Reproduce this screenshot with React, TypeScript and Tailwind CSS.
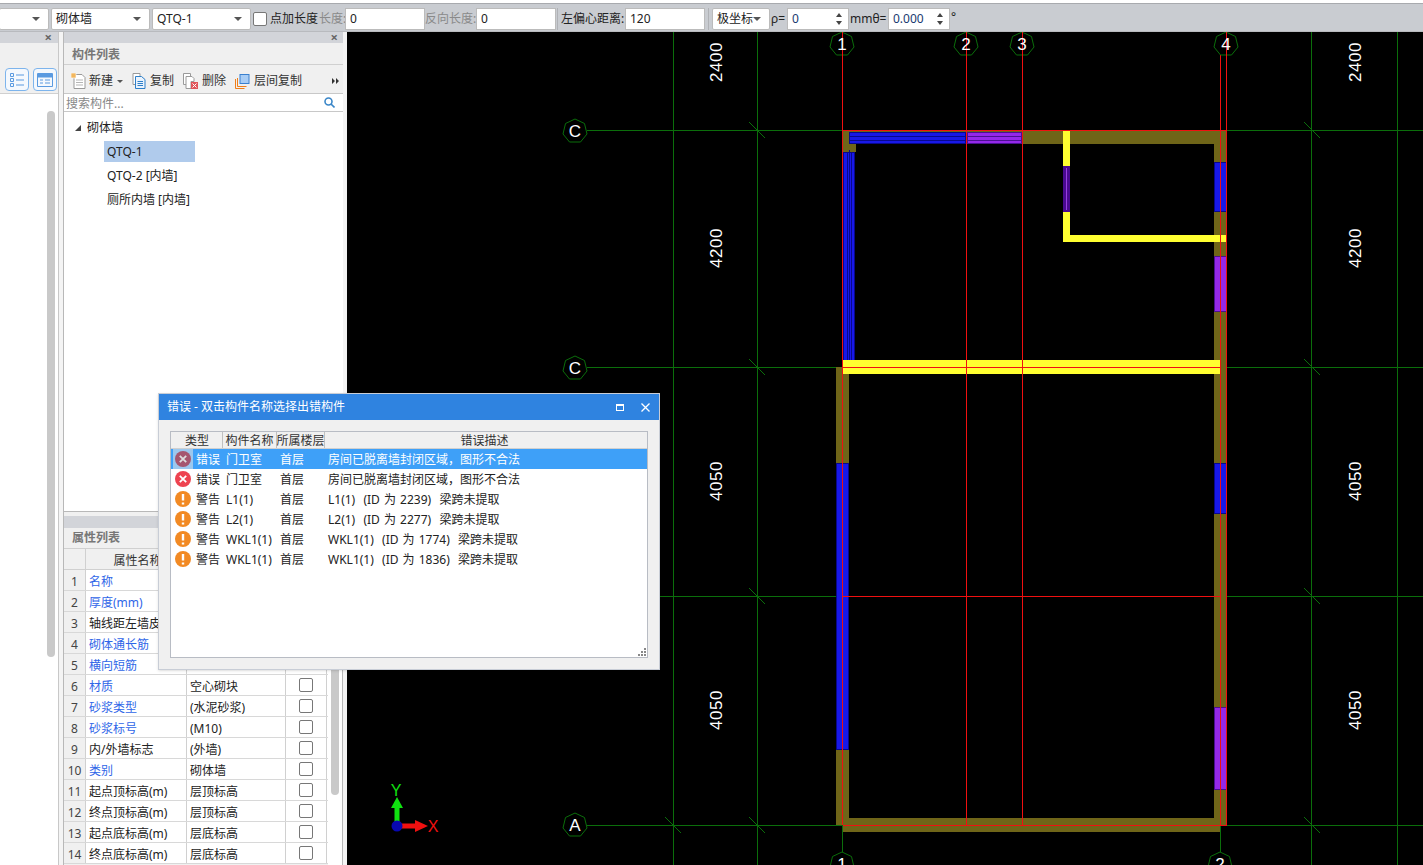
const FONT = "font-['Noto_Sans','Noto_Sans_CJK_SC',sans-serif]";

const errors = [
  { kind: "错误", name: "门卫室", floor: "首层", desc: "房间已脱离墙封闭区域，图形不合法", selected: true },
  { kind: "错误", name: "门卫室", floor: "首层", desc: "房间已脱离墙封闭区域，图形不合法" },
  { kind: "警告", name: "L1(1)", floor: "首层", desc: "L1(1)  (ID 为 2239)  梁跨未提取" },
  { kind: "警告", name: "L2(1)", floor: "首层", desc: "L2(1)  (ID 为 2277)  梁跨未提取" },
  { kind: "警告", name: "WKL1(1)", floor: "首层", desc: "WKL1(1)  (ID 为 1774)  梁跨未提取" },
  { kind: "警告", name: "WKL1(1)", floor: "首层", desc: "WKL1(1)  (ID 为 1836)  梁跨未提取" },
];

const props = [
  { name: "名称", value: "", blue: true },
  { name: "厚度(mm)", value: "", blue: true },
  { name: "轴线距左墙皮距离", value: "" },
  { name: "砌体通长筋", value: "", blue: true },
  { name: "横向短筋", value: "", blue: true },
  { name: "材质", value: "空心砌块", blue: true, check: true },
  { name: "砂浆类型", value: "(水泥砂浆)", blue: true, check: true },
  { name: "砂浆标号", value: "(M10)", blue: true, check: true },
  { name: "内/外墙标志", value: "(外墙)", check: true },
  { name: "类别", value: "砌体墙", blue: true, check: true },
  { name: "起点顶标高(m)", value: "层顶标高", check: true },
  { name: "终点顶标高(m)", value: "层顶标高", check: true },
  { name: "起点底标高(m)", value: "层底标高", check: true },
  { name: "终点底标高(m)", value: "层底标高", check: true },
];

function Caret() {
  return <span className="h-0 w-0 border-x-[4px] border-t-[4px] border-x-transparent border-t-[#555]" />;
}

function Select({ w, text }: { w: string; text: string }) {
  return (
    <div className={`${w} flex h-[22px] shrink-0 items-center justify-between rounded-[2px] border border-[#bbb] bg-white pl-1 pr-2`}>
      <span>{text}</span>
      <Caret />
    </div>
  );
}

function Field({ w, text }: { w: string; text: string }) {
  return <div className={`${w} flex h-[22px] shrink-0 items-center border border-[#bbb] bg-white pl-1`}>{text}</div>;
}

function Spin({ w, text }: { w: string; text: string }) {
  return (
    <div className={`${w} flex h-[22px] shrink-0 items-center justify-between border border-[#bbb] bg-white pl-1 pr-1.5 text-[#1a3a70]`}>
      <span>{text}</span>
      <span className="flex flex-col gap-[4px]">
        <span className="h-0 w-0 border-x-[3px] border-b-[4px] border-x-transparent border-b-[#444]" />
        <span className="h-0 w-0 border-x-[3px] border-t-[4px] border-x-transparent border-t-[#444]" />
      </span>
    </div>
  );
}

function Toolbar() {
  return (
    <div className="flex h-[27px] items-center whitespace-nowrap bg-[#c9ccd1] pt-[2px] text-[12px] text-[#222]">
      <Select w="w-[50px] ml-[-1px]" text="" />
      <Select w="w-[99px] ml-[2px]" text="砌体墙" />
      <Select w="w-[99px] ml-[2px]" text="QTQ-1" />
      <span className="ml-[2px] h-[14px] w-[14px] shrink-0 rounded-[2px] border border-[#777] bg-white" />
      <span className="ml-[3px] w-[49px] shrink-0">点加长度</span>
      <span className="w-[26px] shrink-0 text-[#8a8a8a]">长度:</span>
      <Field w="w-[80px]" text="0" />
      <span className="w-[51px] shrink-0 text-center text-[#8a8a8a]">反向长度:</span>
      <Field w="w-[80px]" text="0" />
      <span className="ml-[1px] h-[22px] w-px shrink-0 bg-[#b0b2b6]" />
      <span className="ml-[3px] w-[64px] shrink-0">左偏心距离:</span>
      <Field w="w-[80px]" text="120" />
      <span className="mx-[3px] h-[22px] w-px shrink-0 bg-[#b0b2b6]" />
      <Select w="w-[58px]" text="极坐标" />
      <span className="w-[17px] shrink-0 pl-[1px]">ρ=</span>
      <Spin w="w-[62px]" text="0" />
      <span className="w-[39px] shrink-0 pl-[1px]">mmθ=</span>
      <Spin w="w-[62px]" text="0.000" />
      <span className="ml-[1px] -translate-y-[2px]">°</span>
    </div>
  );
}

function NewIcon() {
  return (
    <svg width="16" height="16" viewBox="0 0 16 16" className="shrink-0">
      <path d="M3 1.5h8l3 3v11H3z" fill="#fff" stroke="#9a9a9a" />
      <path d="M5 7h7M5 9.5h7M5 12h7" stroke="#b5b5b5" />
      <rect x="0" y="0" width="5" height="5" fill="#f2b75e" stroke="#fff" strokeWidth=".6" />
    </svg>
  );
}

function CopyIcon() {
  return (
    <svg width="14" height="16" viewBox="0 0 14 16" className="shrink-0">
      <path d="M1 .5h7v11H1z" fill="#fff" stroke="#9a9a9a" />
      <path d="M3.5 3.5h6l3.5 3v9H3.5z" fill="#eaf3fd" stroke="#2e7fc8" />
      <path d="M5.5 8.5h5.5M5.5 10.5h5.5M5.5 12.5h5.5" stroke="#2e7fc8" />
    </svg>
  );
}

function DeleteIcon() {
  return (
    <svg width="15" height="16" viewBox="0 0 15 16" className="shrink-0">
      <path d="M.5.5h7v11h-7z" fill="#fff" stroke="#9a9a9a" />
      <path d="M3 3.5h6l2 2v3H8v7H3z" fill="#fff" stroke="#9a9a9a" />
      <rect x="8" y="9" width="7" height="7" fill="#e0555a" />
      <path d="M9.5 10.5l4 4M13.5 10.5l-4 4" stroke="#fff" />
    </svg>
  );
}

function LayerIcon() {
  return (
    <svg width="15" height="15" viewBox="0 0 15 15" className="shrink-0">
      <path d="M.5 5v9.5h9M2.5 4v8.500h9" fill="none" stroke="#ef7f1a" />
      <rect x="5" y=".5" width="9" height="9" fill="#a9cdf5" stroke="#3a80cf" />
    </svg>
  );
}

function ListBtn({ kind }: { kind: "list" | "form" }) {
  return (
    <div className="flex h-[23px] w-[24px] items-center justify-center rounded-[4px] border border-[#7db4ec] bg-[#f4f8fd]">
      {kind === "list" ? (
        <svg width="14" height="14" viewBox="0 0 14 14" fill="none" stroke="#5a9ae0">
          <path d="M.5.5h3v3h-3zM.5 5.500h3v3h-3zM.5 10.500h3v3h-3zM6 2h8M6 7h8M6 12h8" />
        </svg>
      ) : (
        <svg width="16" height="14" viewBox="0 0 16 14" fill="none" stroke="#5a9ae0">
          <path d="M.5.500h15v13H.5z" />
          <path d="M1 1h14v3H1z" fill="#5a9ae0" />
          <path d="M3 7h3M8 7h5M3 10h3M8 10h5" />
        </svg>
      )}
    </div>
  );
}

function LeftPane() {
  return (
    <div className="flex w-[59px] shrink-0 flex-col border-r border-[#c8c8c8] bg-white">
      <div className="flex h-[11px] items-center justify-end bg-[#d2d4d9] pr-[6px] text-[13px] font-bold leading-none text-[#666]">×</div>
      <div className="h-[23px] bg-[#f0f0f0]" />
      <div className="flex h-[28px] items-center justify-end gap-[4px] border-b border-[#d0d0d0] bg-[#f0f0f0] pr-[1px]">
        <ListBtn kind="list" />
        <ListBtn kind="form" />
      </div>
      <div className="flex flex-1 justify-end pr-[3px] pt-[17px]">
        <div className="h-[546px] w-[8px] rounded-b-[4px] rounded-t-[4px] bg-[#c9c9c9]" />
      </div>
    </div>
  );
}

function ComponentList() {
  return (
    <div className="flex h-[480px] flex-col border-b border-[#b8b8b8]">
      <div className="flex h-[11px] items-center justify-end bg-[#d2d4d9] pr-[5px] text-[13px] font-bold leading-none text-[#666]">×</div>
      <div className="flex h-[22px] items-center border-b border-[#d0d0d0] bg-[#f0f0f0] pl-[8px] font-bold text-[#777]">
        <span className="translate-y-[1px]">构件列表</span>
      </div>
      <div className="flex h-[28px] items-center whitespace-nowrap bg-[#f0f0f0] pl-[7px] pt-[4px] text-[#333]">
        <NewIcon />
        <span className="ml-[2px]">新建</span>
        <span className="ml-[4px] mr-[9px] h-0 w-0 border-x-[3px] border-t-[3px] border-x-transparent border-t-[#555]" />
        <CopyIcon />
        <span className="ml-[4px]">复制</span>
        <span className="ml-[9px]"><DeleteIcon /></span>
        <span className="ml-[4px]">删除</span>
        <span className="ml-[9px]"><LayerIcon /></span>
        <span className="ml-[4px]">层间复制</span>
        <svg width="7" height="6" viewBox="0 0 7 6" fill="#333" className="ml-auto mr-[4px] shrink-0">
          <path d="M0 0l3 3-3 3zM4 0l3 3-3 3z" />
        </svg>
      </div>
      <div className="flex h-[19px] items-center justify-between border-y border-[#c8c8c8] bg-white pl-[2px] pr-[8px] text-[#888]">
        <span className="translate-y-[1px]">搜索构件...</span>
        <svg width="11" height="11" viewBox="0 0 11 11" fill="none" stroke="#3a86c8" strokeWidth="1.600">
          <circle cx="4.500" cy="4.500" r="3.500" />
          <path d="M7 7l3.500 3.500" />
        </svg>
      </div>
      <div className="flex-1 bg-white pt-[5px] text-[#222]">
        <div className="flex h-[24px] items-center pb-[2px]">
          <span className="ml-[11px] h-0 w-0 border-b-[6px] border-l-[6px] border-b-[#444] border-l-transparent" />
          <span className="ml-[6px]">砌体墙</span>
        </div>
        <div className="ml-[40px] flex h-[21px] w-[91px] items-center bg-[#b0cbec] pl-[3px]">QTQ-1</div>
        <div className="ml-[43px] flex h-[24px] items-center pt-[3px]">QTQ-2 [内墙]</div>
        <div className="ml-[43px] flex h-[24px] items-center pt-[3px]">厕所内墙 [内墙]</div>
      </div>
    </div>
  );
}

function PropertyList() {
  return (
    <div className="mt-[4px] flex flex-1 flex-col">
      <div className="h-[12px] bg-[#d2d4d9]" />
      <div className="flex h-[21px] items-center border-b border-[#d0d0d0] bg-[#f0f0f0] pl-[8px] font-bold text-[#777]">属性列表</div>
      <div className="flex flex-1">
        <div className="w-[264px] shrink-0">
          <div className="flex h-[21px] border-b border-[#d0d0d0] bg-[#f0f0f0] text-[#333]">
            <div className="w-[22px] border-r border-[#d0d0d0]" />
            <div className="flex w-[101px] items-center justify-center whitespace-nowrap border-r border-[#d0d0d0] pl-[3px]">
              <span className="translate-y-[2px]">属性名称</span>
            </div>
            <div className="w-[99px] border-r border-[#d0d0d0]" />
            <div className="w-[41px] border-r border-[#d0d0d0]" />
          </div>
          {props.map((p, i) => (
            <div key={p.name} className="flex h-[21px] border-b border-[#d8d8d8] bg-white">
              <div className="flex w-[22px] items-center justify-center border-r border-[#d0d0d0] bg-[#f0f0f0] text-[#444]">
                <span className="translate-y-[2px]">{i + 1}</span>
              </div>
              <div className={`flex w-[101px] items-center overflow-hidden whitespace-nowrap border-r border-[#d0d0d0] pl-[3px] ${p.blue ? "text-[#2f66e8]" : "text-[#222]"}`}>
                <span className="translate-y-[2px]">{p.name}</span>
              </div>
              <div className="flex w-[99px] items-center border-r border-[#d0d0d0] pl-[3px] text-[#222]">
                <span className="translate-y-[2px]">{p.value}</span>
              </div>
              <div className="flex w-[41px] items-center justify-center border-r border-[#d0d0d0]">
                {p.check && <span className="h-[14px] w-[14px] rounded-[2px] border border-[#777] bg-white" />}
              </div>
            </div>
          ))}
        </div>
        <div className="flex flex-1 justify-center border-r border-[#b8b8b8] bg-white pr-[1px]">
          <div className="mt-[90px] h-[156px] w-[8px] rounded-b-[4px] bg-[#c9c9c9]" />
        </div>
      </div>
    </div>
  );
}

function ErrorIcon({ warn, dim }: { warn: boolean; dim?: boolean }) {
  return (
    <svg width="16" height="16" viewBox="0 0 16 16" className="shrink-0">
      <circle cx="8" cy="8" r="8" fill={warn ? "#f28a24" : dim ? "#a5566f" : "#ee4350"} />
      {warn ? (
        <path d="M8 3v6.500M8 11.500v2" stroke="#fff" strokeWidth="2.400" />
      ) : (
        <path d="M4.800 4.800l6.400 6.400M11.200 4.800l-6.400 6.400" stroke={dim ? "#ddd" : "#fff"} strokeWidth="1.800" />
      )}
    </svg>
  );
}

function ErrorDialog() {
  return (
    <div className="absolute left-[158px] top-[393px] flex h-[277px] w-[502px] flex-col border border-[#c8cdd6] bg-[#f0f0f0] text-[12px] text-[#222] shadow-sm">
      <div className="flex h-[26px] shrink-0 items-center justify-between bg-[#2f83e0] pl-[8px] pr-[9px] text-[#fff]">
        <span>错误 - 双击构件名称选择出错构件</span>
        <div className="flex items-center gap-[17px]">
          <span className="h-[7px] w-[8px] border border-t-2 border-white" />
          <svg width="9" height="9" viewBox="0 0 9 9" stroke="#fff" strokeWidth="1.300"><path d="M.5.500l8 8M8.500.500l-8 8" /></svg>
        </div>
      </div>
      <div className="relative mx-[11px] mt-[11px] flex flex-1 flex-col border border-[#b8bcc4] bg-white">
        <div className="flex h-[17px] shrink-0 border-b border-[#d0d0d0] bg-[#f0f0f0] text-[#333]">
          <div className="flex w-[52px] items-center justify-center border-r border-[#c0c0c0] pl-[1px]"><span className="translate-y-[1px]">类型</span></div>
          <div className="flex w-[54px] items-center justify-center whitespace-nowrap border-r border-[#c0c0c0]"><span className="translate-y-[1px]">构件名称</span></div>
          <div className="flex w-[48px] items-center justify-center whitespace-nowrap border-r border-[#c0c0c0]"><span className="translate-y-[1px]">所属楼层</span></div>
          <div className="flex flex-1 items-center justify-center pr-[3px]"><span className="translate-y-[1px]">错误描述</span></div>
        </div>
        {errors.map((e, i) => (
          <div key={i} className={`flex h-[20px] items-center ${e.selected ? "bg-[#3ea0f8] text-white" : ""}`}>
            <span className={`ml-[2px] flex h-[20px] w-[20px] items-center justify-center ${e.selected ? "bg-[#9cc8ee]" : ""}`}>
              <ErrorIcon warn={e.kind === "警告"} dim={e.selected} />
            </span>
            <span className="ml-[3px] w-[30px] translate-y-[1px]">{e.kind}</span>
            <span className="w-[54px] translate-y-[1px] whitespace-nowrap">{e.name}</span>
            <span className="w-[48px] translate-y-[1px]">{e.floor}</span>
            <span className="translate-y-[1px] whitespace-pre [word-spacing:1px]">{e.desc}</span>
          </div>
        ))}
        <svg width="8" height="8" viewBox="0 0 8 8" fill="#888" className="absolute bottom-[1px] right-[1px]">
          <path d="M6 0h2v2H6zM3 3h2v2H3zM6 3h2v2H6zM0 6h2v2H0zM3 6h2v2H3zM6 6h2v2H6z" />
        </svg>
      </div>
      <div className="h-[11px] shrink-0" />
    </div>
  );
}

const green = "#0b6e0b";
const red = "#f01010";
const olive = "#6f6518";

function Axis({ x, y, label, through }: { x: number; y: number; label: string; through?: boolean }) {
  return (
    <g>
      <polygon
        points={`${x},${y - 12} ${x + 9.500},${y - 7.500} ${x + 12},${y + 3} ${x + 5.500},${y + 11} ${x - 5.500},${y + 11} ${x - 12},${y + 3} ${x - 9.500},${y - 7.500}`}
        fill="#000"
        stroke={green}
      />
      {through && <path d={`M${x + 0.5} 32V${y + 12}`} stroke={red} shapeRendering="crispEdges" />}
      <text x={x} y={y + 6} fill="#fff" fontSize="17" textAnchor="middle" fontFamily="Liberation Sans, sans-serif">{label}</text>
    </g>
  );
}

function Dim({ x, y, label }: { x: number; y: number; label: string }) {
  return (
    <text transform={`translate(${x} ${y}) rotate(-90)`} fill="#fff" fontSize="17" textAnchor="middle" fontFamily="Liberation Sans, sans-serif" letterSpacing="0.500">
      {label}
    </text>
  );
}

// bars: number of dark lines running along the beam
function Rebar({ x, y, w, h, color, edge, bars = 1 }: { x: number; y: number; w: number; h: number; color: string; edge: string; bars?: number }) {
  const vertical = h > w;
  const offsets = bars === 2 ? [-2, 2] : [0];
  return (
    <g>
      <rect x={x + 0.5} y={y + 0.5} width={w - 1} height={h - 1} fill={color} stroke={edge} />
      {offsets.map((o) =>
        vertical ? (
          <path key={o} d={`M${x + Math.floor(w / 2) + o + 0.5} ${y}V${y + h}`} stroke={edge} />
        ) : (
          <path key={o} d={`M${x} ${y + Math.floor(h / 2) + o + 0.5}H${x + w}`} stroke={edge} />
        ),
      )}
      {vertical ? (
        <path d={`M${x + Math.floor(w / 2) + 0.5} ${y - 2}V${y + h + 2}`} stroke={edge} />
      ) : (
        <path d={`M${x - 2} ${y + Math.floor(h / 2) + 0.5}H${x + w + 2}`} stroke={edge} strokeOpacity="0" />
      )}
    </g>
  );
}

function Plan() {
  const ticks: [number, number][] = [
    [757, 130], [757, 367], [757, 596], [757, 825], [673, 825],
    [1312, 130], [1312, 367], [1312, 596], [1312, 825],
  ];
  return (
    <svg className="h-full w-full" viewBox="347 32 1076 833">
      <g stroke={green} fill="none" shapeRendering="crispEdges">
        <path d="M673.500 32V865M757.500 32V865M1311.500 32V865M1397.500 32V865" />
        <path d="M587 130.500H1423M587 367.500H1423M347 596.500H1423M587 825.500H1423" />
        <path d="M842.500 825V855M1220.500 825V855" />
      </g>
      <g stroke={green}>
        {ticks.map(([x, y]) => (
          <path key={`${x}-${y}`} d={`M${x - 8} ${y - 8}L${x + 8} ${y + 8}`} />
        ))}
      </g>

      <g fill={olive} shapeRendering="crispEdges">
        <rect x="843" y="131" width="384" height="13" />
        <rect x="843" y="131" width="13" height="21" />
        <rect x="1214" y="131" width="13" height="694" />
        <rect x="836" y="367" width="13" height="458" />
        <rect x="836" y="818" width="391" height="7" />
        <rect x="843" y="825" width="377" height="7" />
      </g>

      <g shapeRendering="crispEdges">
        <Rebar x={843} y={152} w={12} h={210} color="#1818e8" edge="#08088c" bars={2} />
        <Rebar x={849} y={132} w={117} h={12} color="#1818e8" edge="#08088c" bars={2} />
        <Rebar x={967} y={132} w={55} h={12} color="#9428e8" edge="#4a1090" bars={2} />
        <Rebar x={836} y={463} w={13} h={287} color="#1818e8" edge="#08088c" />
        <Rebar x={1214} y={162} w={13} h={50} color="#1818e8" edge="#08088c" />
        <Rebar x={1214} y={463} w={13} h={51} color="#1818e8" edge="#08088c" />
        <Rebar x={1214} y={256} w={13} h={56} color="#9428e8" edge="#4a1090" />
        <Rebar x={1214} y={707} w={13} h={83} color="#9428e8" edge="#4a1090" />

        <rect x="1063" y="131" width="7" height="111" fill="#ffff30" />
        <rect x="1063" y="235" width="164" height="7" fill="#ffff30" />
        <rect x="843" y="360" width="377" height="14" fill="#ffff30" />
        <rect x="1063" y="166" width="7" height="46" fill="#4a0a90" />
        <rect x="1066" y="168" width="1" height="42" fill="#9a40e0" />
      </g>

      <g stroke={red} fill="none" shapeRendering="crispEdges">
        <path d="M842.500 55V825M966.500 55V825M1022.500 55V825M1220.500 55V825M1226.500 55V825" />
        <path d="M843 130.500H1227M843 367.500H1220M843 596.500H1220M843 825.500H1227" />
      </g>

      <Axis x={842} y={44} label="1" through />
      <Axis x={966} y={44} label="2" through />
      <Axis x={1022} y={44} label="3" through />
      <Axis x={1226} y={44} label="4" through />
      <Axis x={575} y={131} label="C" />
      <Axis x={575} y={368} label="C" />
      <Axis x={575} y={825} label="A" />
      <Axis x={842} y={864} label="1" />
      <Axis x={1220} y={864} label="2" />

      {[722, 1361].map((x) => (
        <g key={x}>
          <Dim x={x} y={62} label="2400" />
          <Dim x={x} y={248} label="4200" />
          <Dim x={x} y={481} label="4050" />
          <Dim x={x} y={710} label="4050" />
        </g>
      ))}
      <Dim x={636} y={410} label="00" />

      <path d="M397 826V806" stroke="#10e010" strokeWidth="5" />
      <polygon points="397,797 403,808 391,808" fill="#10e010" />
      <path d="M397 826H418" stroke="#f01010" strokeWidth="5" />
      <polygon points="428,826 415,820 415,832" fill="#f01010" />
      <circle cx="397" cy="826" r="5.500" fill="#0808b0" />
      <text x="396" y="796" fill="#10e010" fontSize="16" textAnchor="middle" fontFamily="Liberation Sans, sans-serif">Y</text>
      <text x="433" y="832" fill="#f01010" fontSize="16" textAnchor="middle" fontFamily="Liberation Sans, sans-serif">X</text>
    </svg>
  );
}

export default function App() {
  return (
    <div className={`relative flex h-[865px] w-[1423px] flex-col overflow-hidden bg-[#f0f0f0] text-[12px] ${FONT}`}>
      <div className="h-[4px] shrink-0 border-b border-[#a8aaae] bg-white" />
      <Toolbar />
      <div className="flex min-h-0 flex-1 border-t border-[#b8babe]">
        <LeftPane />
        <div className="w-[4px] shrink-0 bg-[#f4f4f4]" />
        <div className="flex w-[280px] shrink-0 flex-col border-l border-[#b8b8b8]">
          <ComponentList />
          <PropertyList />
        </div>
        <div className="w-[4px] shrink-0 bg-[#f4f4f4]" />
        <div className="min-w-0 flex-1 bg-black">
          <Plan />
        </div>
      </div>
      <ErrorDialog />
    </div>
  );
}
